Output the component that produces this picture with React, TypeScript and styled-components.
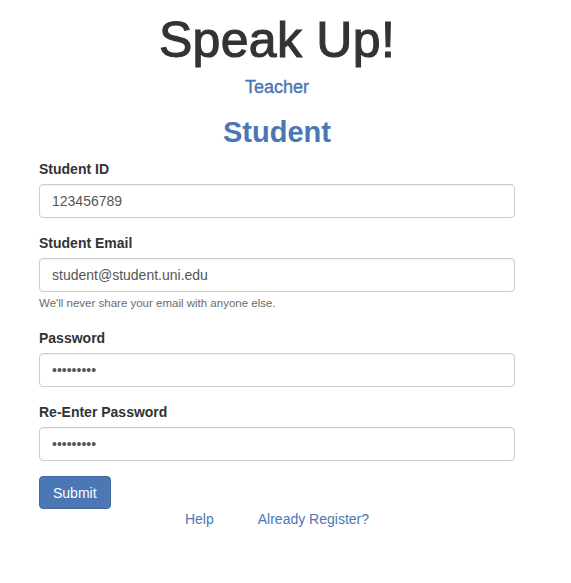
import React from "react";
import styled, { createGlobalStyle } from "styled-components";

const Global = createGlobalStyle`
  html, body { margin: 0; padding: 0; background: #fff; }
  body { font-family: "Liberation Sans", Arial, sans-serif; font-size: 14px; line-height: 1.42857; color: #333; }
  * { box-sizing: border-box; }
`;

const Page = styled.div`
  width: 476px;
  margin-left: 39px;
  padding-top: 13px;
`;

const Title = styled.h1`
  margin: 0;
  text-align: center;
  font-size: 50px;
  line-height: 55px;
  font-weight: 400;
  letter-spacing: 0.3px;
  color: #333;
  -webkit-text-stroke: 1.1px #333;
`;

const SubLink = styled.a`
  display: block;
  text-align: center;
  margin-top: 9px;
  font-size: 18px;
  line-height: 20px;
  color: #4b77b4;
  text-decoration: none;
  -webkit-text-stroke: 0.4px #4b77b4;
`;

const Heading = styled.h2`
  margin: 20px 0 11px;
  text-align: center;
  font-size: 29px;
  line-height: 31px;
  font-weight: 700;
  color: #4b77b4;
`;

const Form = styled.form`
  display: flex;
  flex-direction: column;
`;

const Group = styled.div`
  display: flex;
  flex-direction: column;
  margin-bottom: 15px;
`;

const Label = styled.label`
  font-weight: 700;
  font-size: 14px;
  line-height: 20px;
  margin-bottom: 5px;
  color: #333;
`;

const Input = styled.input`
  height: 34px;
  width: 100%;
  padding: 6px 12px;
  font-family: "Liberation Sans", Arial, sans-serif;
  font-size: 14px;
  color: #555;
  background: #fff;
  border: 1px solid #ccc;
  border-radius: 4px;
  box-shadow: inset 0 1px 1px rgba(0,0,0,0.06);
  outline: none;
`;

const Help = styled.small`
  display: block;
  margin-top: 4px;
  margin-bottom: 3px;
  font-size: 11.5px;
  line-height: 14px;
  color: #6b6b6b;
`;

const Button = styled.button`
  align-self: flex-start;
  height: 33px;
  padding: 6px 13px;
  font-family: "Liberation Sans", Arial, sans-serif;
  font-size: 14px;
  line-height: 20px;
  color: #fff;
  background: #4b77b4;
  border: 1px solid #44699f;
  border-radius: 4px;
`;

const Links = styled.div`
  display: flex;
  justify-content: center;
  gap: 44px;
  line-height: 20px;
`;

const Link = styled.a`
  color: #4b77b4;
  text-decoration: none;
  font-size: 14px;
`;

export default function App() {
  return (
    <>
      <Global />
      <Page>
        <Title>Speak Up!</Title>
        <SubLink href="#">Teacher</SubLink>
        <Heading>Student</Heading>
        <Form onSubmit={(e) => e.preventDefault()}>
          <Group>
            <Label>Student ID</Label>
            <Input defaultValue="123456789" />
          </Group>
          <Group>
            <Label>Student Email</Label>
            <Input defaultValue="student@student.uni.edu" />
            <Help>We'll never share your email with anyone else.</Help>
          </Group>
          <Group>
            <Label>Password</Label>
            <Input type="password" defaultValue="123456789" />
          </Group>
          <Group>
            <Label>Re-Enter Password</Label>
            <Input type="password" defaultValue="123456789" />
          </Group>
          <Button type="submit">Submit</Button>
          <Links>
            <Link href="#">Help</Link>
            <Link href="#">Already Register?</Link>
          </Links>
        </Form>
      </Page>
    </>
  );
}
